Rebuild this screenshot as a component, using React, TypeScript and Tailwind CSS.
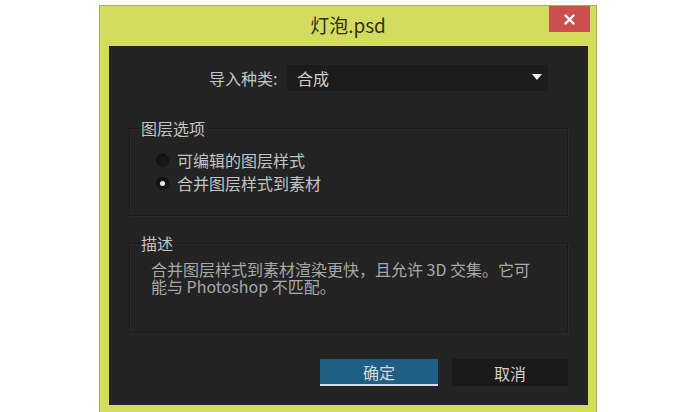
import type { ReactNode } from "react";

const cjk = "font-['Noto_Sans_CJK_SC','Noto_Sans',sans-serif]";

function Radio({ checked, label }: { checked?: boolean; label: string }) {
  return (
    <label className="flex h-5 items-center gap-2">
      <span className="flex size-[13px] items-center justify-center rounded-full bg-[#181818] shadow-[inset_0_1px_2px_rgba(0,0,0,0.6)]">
        {checked && <span className="size-[5px] rounded-full bg-[#e8e8e8]" />}
      </span>
      <span className="text-[16px] leading-5 text-[#c4c4c4]">{label}</span>
    </label>
  );
}

function GroupBox({ title, className, children }: { title: string; className?: string; children: ReactNode }) {
  return (
    <fieldset
      className={`border border-[#1a1a1a] shadow-[1px_1px_0_#2c2c2c,inset_1px_1px_0_#2a2a2a] ${className ?? ""}`}
    >
      <legend className="ml-[11px] bg-[#232323] pr-1 text-[16px] leading-4 text-[#c4c4c4]">{title}</legend>
      {children}
    </fieldset>
  );
}

export default function App() {
  return (
    <div className={`h-[412px] w-[690px] overflow-hidden bg-white pl-[99px] pt-[5px] ${cjk}`}>
      <div className="flex h-[412px] w-[498px] flex-col border border-[#a9ad5c] bg-[#d4dc60]">
        <div className="relative flex h-[40px] items-center justify-center">
          <span className="pb-[2px] text-[19px] text-[#2e2e22]">灯泡.psd</span>
          <button className="absolute right-[6px] top-0 flex h-[26px] w-[41px] items-center justify-center bg-[#c9504f]">
            <svg width="11" height="11" viewBox="0 0 11 11">
              <path d="M1.5 1.5 L9.5 9.5 M9.5 1.5 L1.5 9.5" stroke="#fff" strokeWidth="2.4" strokeLinecap="round" />
            </svg>
          </button>
        </div>

        <div className="ml-[9px] mr-[8px] flex h-[359px] flex-col bg-[#232323] px-[20px] pt-[19px]">
          <div className="flex items-center pr-[20px]">
            <span className="ml-[80px] w-[70px] text-[16px] text-[#c4c4c4]">导入种类:</span>
            <div className="ml-[8px] flex h-[26px] flex-1 items-center justify-between bg-[#1c1c1c] pl-[10px] pr-[6px]">
              <span className="text-[16px] text-[#d0d0d0]">合成</span>
              <span className="mb-[2px] h-0 w-0 border-x-[5px] border-t-[6px] border-x-transparent border-t-[#f0f0f0]" />
            </div>
          </div>

          <GroupBox title="图层选项" className="mt-[29px] h-[96px]">
            <div className="flex flex-col gap-[3px] pl-[26px] pt-[14px]">
              <Radio label="可编辑的图层样式" />
              <Radio checked label="合并图层样式到素材" />
            </div>
          </GroupBox>

          <GroupBox title="描述" className="mt-[19px] h-[98px]">
            <p className="pl-[21px] pr-[24px] pt-[10px] text-[16px] leading-[17px] text-[#a8a8a8]">
              合并图层样式到素材渲染更快，且允许 3D 交集。它可能与 Photoshop 不匹配。
            </p>
          </GroupBox>

          <div className="mt-[26px] flex justify-end gap-[14px]">
            <button className="h-[27px] w-[118px] border-b-2 border-[#d6dde4] bg-[#1f5f86] text-[16px] text-[#d8d8d8]">
              确定
            </button>
            <button className="h-[27px] w-[116px] bg-[#1a1a1a] text-[16px] text-[#d0d0d0]">取消</button>
          </div>
        </div>
      </div>
    </div>
  );
}
